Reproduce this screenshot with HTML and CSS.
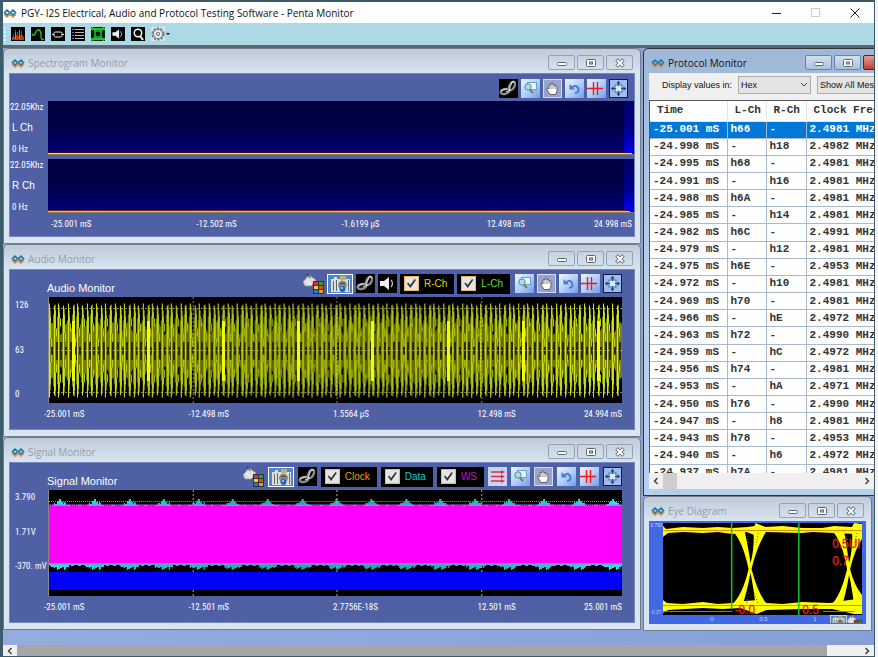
FILE: index.html
```
<!DOCTYPE html>
<html lang="en">
<head>
<meta charset="utf-8">
<title>PGY- I2S Electrical, Audio and Protocol Testing Software - Penta Monitor</title>
<link rel="stylesheet" href="styles.css">
</head>
<body>
<svg class="defs" aria-hidden="true">
  <defs>
    <linearGradient id="blueTile" x1="0" y1="0" x2="1" y2="1"><stop offset="0" stop-color="#eef5ff"/><stop offset=".5" stop-color="#b5d0fa"/><stop offset="1" stop-color="#6f9cf0"/></linearGradient>
    <linearGradient id="spec" x1="0" y1="0" x2="0" y2="1"><stop offset="0" stop-color="#000040"/><stop offset=".5" stop-color="#000048"/><stop offset="1" stop-color="#00007c"/></linearGradient>
    <linearGradient id="edge" x1="0" y1="0" x2="0" y2="1"><stop offset="0" stop-color="#000060"/><stop offset=".6" stop-color="#000090"/><stop offset="1" stop-color="#0000f0"/></linearGradient>
  </defs>
  <symbol id="logo" viewBox="0 0 14 10"><g fill="none" stroke-width="2"><path d="M1.200 5 4 7.800 6.800 5M7.200 5 10 7.800 12.800 5" stroke="#e0904a" transform="translate(0 1)"/><path d="M1.400 4.500 4 2 6.600 4.500 4 7zM7.400 4.500 10 2 12.600 4.500 10 7z" stroke="#1f7fa8" stroke-width="1.700" stroke-linejoin="round"/></g></symbol>
  <symbol id="i-min" viewBox="0 0 12 10"><rect x="1.500" y="4.500" width="9" height="3" rx="1" fill="#fff" stroke="#5a6472"/></symbol>
  <symbol id="i-max" viewBox="0 0 12 10"><rect x="1.500" y="1.500" width="9" height="7" rx="1" fill="#fff" stroke="#5a6472"/><rect x="4.500" y="4" width="3" height="2" fill="#ccd" stroke="#5a6472"/></symbol>
  <symbol id="i-close" viewBox="0 0 12 10"><path d="M2.500 1.500 9.500 8.500M9.500 1.500 2.500 8.500" stroke="#5a6472" stroke-width="3.600"/><path d="M3 2 9 8M9 2 3 8" stroke="#fff" stroke-width="2"/></symbol>
  <symbol id="i-link" viewBox="0 0 19 19"><rect width="19" height="19" fill="#000"/><g fill="none" stroke="#8c8c8c" stroke-width="2.400"><ellipse cx="6" cy="12.500" rx="4.300" ry="2.300" transform="rotate(-15 6 12.500)"/><ellipse cx="13" cy="7" rx="4.500" ry="2.400" transform="rotate(-62 13 7)"/></g><g fill="none" stroke="#e4e4e4" stroke-width="1"><path d="M2 12q2-2.500 6-2M10 11 13 3q3-1 3 1"/><path d="M7 12.500q3 0 5-2"/></g></symbol>
  <symbol id="i-zoom" viewBox="0 0 19 19"><rect width="19" height="19" fill="url(#blueTile)"/><rect x="6.500" y="3.500" width="9" height="7" fill="#eaf6ff" stroke="#6c9fc8"/><circle cx="7" cy="8" r="3.200" fill="#a8dfe4" stroke="#4790b0"/><path d="M9 11l3 3" stroke="#8a7838" stroke-width="2"/></symbol>
  <symbol id="i-hand" viewBox="0 0 19 19"><rect x=".5" y=".5" width="18" height="18" fill="#98a4cf" stroke="#d4dcf4"/><path d="M7 15.500 3.500 10q0-2 2.500 0V6q1-1.500 2 0V4.500q1-1.500 2 0V6q1-1.500 2 0v1q1.500-1 2 1v4l-1.500 3.500z" fill="#fff" stroke="#444" stroke-width=".8"/><path d="M8 6v4M10 5v5M12 6v4" stroke="#666" stroke-width=".7"/></symbol>
  <symbol id="i-undo" viewBox="0 0 19 19"><rect width="19" height="19" fill="url(#blueTile)"/><path d="M6.500 9Q11 4.500 13 9T10 14" fill="none" stroke="#4a7ad0" stroke-width="2"/><path d="M4.500 5v5.500H10z" fill="#4a7ad0"/></symbol>
  <symbol id="i-cross" viewBox="0 0 19 19"><rect width="19" height="19" fill="url(#blueTile)"/><path d="M0 9.500H16M6.500 3V16M10.500 3V16" stroke="#f41818" stroke-width="1.400"/></symbol>
  <symbol id="i-fit" viewBox="0 0 19 19"><rect x=".5" y=".5" width="18" height="18" fill="#9dbdf1" stroke="#101d40"/><rect x="6" y="6" width="7" height="7" fill="#d9e8ff" stroke="#4770b8"/><path d="M9.500 2 7.500 4.500h4zM9.500 17l-2-2.500h4zM2 9.500l2.500-2v4zM17 9.500l-2.500-2v4z" fill="#182848"/><path d="M9.500 4v3M9.500 12v3M4 9.500h3M12 9.500h3" stroke="#304878"/></symbol>
  <symbol id="i-lines" viewBox="0 0 19 19"><rect width="19" height="19" fill="#c3d6fa"/><path d="M3 5H15M3 9.500H15M3 14H15" stroke="#e82c34" stroke-width="1.400"/><path d="M13 3l4 2-4 2zM13 7.500l4 2-4 2zM13 12l4 2-4 2z" fill="#e82c34"/></symbol>
  <symbol id="i-speaker" viewBox="0 0 19 19"><rect width="19" height="19" fill="#000"/><path d="M2 7h4l5-4v13l-5-4H2z" fill="#eee"/><path d="M13 6q3 3.500 0 7" fill="none" stroke="#bbb" stroke-width="1.300"/></symbol>
  <symbol id="i-camera" viewBox="0 0 26 20"><rect x=".5" y=".5" width="25" height="19" fill="#4f86c8" stroke="#fff"/><path d="M4 5h3V3h3v2h3V3h6v2h4v13H4z" fill="#e0e0da"/><path d="M6.500 7v10M9.500 6v11M21.500 6v11" stroke="#666"/><path d="M13 6V2h6v4" fill="#c0b070"/><circle cx="15.500" cy="11" r="4.500" fill="#8c8c8c"/><circle cx="15.500" cy="15" r="3" fill="#1b65cc"/><path d="M13 10q2-2 5 0" stroke="#333" fill="none"/><circle cx="15" cy="14" r="1" fill="#bfe4ff"/></symbol>
  <symbol id="i-paint" viewBox="0 0 21 20"><path d="M0 8 6 1l7 5-5 6H2z" fill="#dcdcdc" stroke="#999" stroke-width=".6"/><path d="M3 6l6 5" stroke="#fff"/><path d="M7 4Q6 0 3 0" fill="none" stroke="#333"/><path d="M10 7h11v13H10z" fill="#333"/><path d="M11 8h4v3h-4z" fill="#e03020"/><path d="M16 8h4v3h-4z" fill="#30a030"/><path d="M11 12h4v3h-4z" fill="#f0d020"/><path d="M16 12h4v3h-4z" fill="#e05010"/><path d="M11 16h4v3h-4z" fill="#3070e0"/><path d="M16 16h4v3h-4z" fill="#e0a020"/></symbol>
  <symbol id="i-gear" viewBox="0 0 14 14"><rect width="14" height="14" fill="#d6e8ee"/><circle cx="7" cy="7" r="5.800" fill="none" stroke="#68747a" stroke-width="1.600" stroke-dasharray="2.300 1.340"/><circle cx="7" cy="7" r="4.500" fill="#f0f4f6" stroke="#68747a"/><circle cx="7" cy="7" r="1.800" fill="#c8d8e0" stroke="#68747a"/></symbol>
  <symbol id="i-chevron" viewBox="0 0 8 6"><path d="M1 1l3 3 3-3" fill="none" stroke="#444"/></symbol>
  <symbol id="i-left" viewBox="0 0 8 10"><path d="M5.500 2 2.500 5l3 3" fill="none" stroke="#444" stroke-width="1.500"/></symbol>
  <symbol id="i-right" viewBox="0 0 8 10"><path d="M2.500 2 5.500 5 2.500 8" fill="none" stroke="#444" stroke-width="1.500"/></symbol>
</svg>

<div class="app">
  <header class="titlebar">
    <svg class="logo"><use href="#logo"/></svg>
    <h1>PGY- I2S Electrical, Audio and Protocol Testing Software - Penta Monitor</h1>
    <div class="sysbuttons">
      <button aria-label="Minimize"><svg viewBox="0 0 10 10"><path d="M0 5.500h9" stroke="#222"/></svg></button>
      <button aria-label="Maximize" disabled><svg viewBox="0 0 10 10"><rect x=".5" y=".5" width="8" height="8" fill="none" stroke="#ccc"/></svg></button>
      <button aria-label="Close"><svg viewBox="0 0 10 10"><path d="M.5.5l9 9M9.500.5l-9 9" stroke="#222"/></svg></button>
    </div>
  </header>

  <nav class="mainbar" aria-label="Monitors">
    <span class="grip"></span>
    <button aria-label="Spectrogram"><svg viewBox="0 0 14 14"><rect width="14" height="14" fill="#000"/><path d="M1 13V10h1V7h1v3h1V3h1v5h1V5h1v4h1V2h1v6h1V4h1v4h1v2h1v3z" fill="#b83808"/><path d="M4.500 12V5M8.500 12V4" stroke="#f07818"/></svg></button>
    <button aria-label="Audio"><svg viewBox="0 0 14 14"><rect width="14" height="14" fill="#000"/><path d="M1 7Q3 10 4.500 6T8 3 10 9 13 12" fill="none" stroke="#20c020" stroke-width="1.400"/></svg></button>
    <button aria-label="Signal"><svg viewBox="0 0 14 14"><rect width="14" height="14" fill="#000"/><rect x="3" y="5" width="8" height="5" rx="1.500" fill="none" stroke="#eee"/><path d="M1 7.500h2M11 7.500h2" stroke="#eee"/></svg></button>
    <button aria-label="Protocol"><svg viewBox="0 0 14 14"><rect width="14" height="14" fill="#000"/><path d="M4 2.500h9M4 5.500h9M4 8.500h9M4 11.500h9" stroke="#bbb"/><path d="M1.500 2.500h1M1.500 5.500h1M1.500 8.500h1M1.500 11.500h1" stroke="#fff"/></svg></button>
    <button aria-label="Eye diagram"><svg viewBox="0 0 14 14"><rect width="14" height="14" fill="#021804"/><path d="M0 2h14M0 12h14" stroke="#18c828" stroke-width="2"/><path d="M1 0 4 4v6L1 14M13 0 10 4v6l3 4M4 4h6M4 10h6" fill="none" stroke="#18c828" stroke-width="1.500"/></svg></button>
    <button aria-label="Sound"><svg><use href="#i-speaker"/></svg></button>
    <button aria-label="Search"><svg viewBox="0 0 14 14"><rect width="14" height="14" fill="#000"/><circle cx="7" cy="6" r="3.700" fill="none" stroke="#fff" stroke-width="1.500"/><path d="M9 9l3 4" stroke="#fff" stroke-width="2"/></svg></button>
    <button class="gear" aria-label="Settings"><svg><use href="#i-gear"/></svg><span class="caret"></span></button>
  </nav>

  <main class="desktop">
    <div class="column">
      <section class="window">
        <div class="caption"><svg class="logo"><use href="#logo"/></svg><h2>Spectrogram Monitor</h2>
          <div class="winbuttons"><button aria-label="Minimize"><svg><use href="#i-min"/></svg></button><button aria-label="Restore"><svg><use href="#i-max"/></svg></button><button aria-label="Close"><svg><use href="#i-close"/></svg></button></div></div>
        <div class="panel spectro">
          <div class="tools">
            <button aria-label="Link"><svg><use href="#i-link"/></svg></button><button aria-label="Zoom"><svg><use href="#i-zoom"/></svg></button><button aria-label="Pan"><svg><use href="#i-hand"/></svg></button><button aria-label="Undo zoom"><svg><use href="#i-undo"/></svg></button><button aria-label="Cursors"><svg><use href="#i-cross"/></svg></button><button aria-label="Fit"><svg><use href="#i-fit"/></svg></button>
          </div>
          <div class="channel"><div class="scale"><span>22.05Khz</span><b>L Ch</b><span>0 Hz</span></div>
            <svg class="spectrum" viewBox="0 0 587 54" preserveAspectRatio="none"><rect width="587" height="54" fill="url(#spec)"/><rect x="577" width="10" height="52" fill="url(#edge)"/><path d="M0 51.500H580" stroke="#4c0010"/><path d="M0 52.500H585" stroke="#f4dc80"/><path d="M0 53.500H587" stroke="#8a8040"/></svg></div>
          <div class="channel"><div class="scale"><span>22.05Khz</span><b>R Ch</b><span>0 Hz</span></div>
            <svg class="spectrum" viewBox="0 0 587 54" preserveAspectRatio="none"><rect width="587" height="54" fill="url(#spec)"/><rect x="577" width="10" height="52" fill="url(#edge)"/><path d="M0 51.500H580" stroke="#702010"/><path d="M0 52.500H583" stroke="#dcc080"/><path d="M0 53.500H587" stroke="#8a8050"/></svg></div>
          <div class="axis"><span>-25.001 mS</span><span>-12.502 mS</span><span>-1.6199 µS</span><span>12.498 mS</span><span>24.998 mS</span></div>
        </div>
      </section>

      <section class="window">
        <div class="caption"><svg class="logo"><use href="#logo"/></svg><h2>Audio Monitor</h2>
          <div class="winbuttons"><button aria-label="Minimize"><svg><use href="#i-min"/></svg></button><button aria-label="Restore"><svg><use href="#i-max"/></svg></button><button aria-label="Close"><svg><use href="#i-close"/></svg></button></div></div>
        <div class="panel scope">
          <div class="head"><h3>Audio Monitor</h3>
            <div class="tools">
              <button class="paint" aria-label="Colors"><svg><use href="#i-paint"/></svg></button><button class="camera" aria-label="Snapshot"><svg><use href="#i-camera"/></svg></button><button aria-label="Link"><svg><use href="#i-link"/></svg></button><button aria-label="Play"><svg><use href="#i-speaker"/></svg></button>
              <label class="check yellow"><input type="checkbox" checked>R-Ch</label><label class="check green"><input type="checkbox" checked>L-Ch</label>
              <button class="first" aria-label="Zoom"><svg><use href="#i-zoom"/></svg></button><button aria-label="Pan"><svg><use href="#i-hand"/></svg></button><button aria-label="Undo zoom"><svg><use href="#i-undo"/></svg></button><button aria-label="Cursors"><svg><use href="#i-cross"/></svg></button><button aria-label="Fit"><svg><use href="#i-fit"/></svg></button>
            </div></div>
          <div class="plotrow"><div class="scale wide"><span>126</span><span>63</span><span>0</span></div>
            <svg class="plot" viewBox="0 0 574 106" preserveAspectRatio="none"><rect width="574" height="106" fill="#000"/><g shape-rendering="crispEdges"><path id="aFill" stroke="#7c8400"/><path id="aDark" stroke="#262600" stroke-width="2"/><path id="aLime" fill="none" stroke="#b4dc20"/><path id="aPeak" stroke="#dcec10"/><path id="aHot" stroke="#f4fc00" stroke-width="3"/></g><path d="M0 11.500H574M0 53.500H574M0 95.500H574M144.500 0V106M288.500 0V106M433.500 0V106" stroke="#ded8a0" stroke-opacity=".6" stroke-dasharray="2 2"/></svg></div>
          <div class="axis"><span>-25.001 mS</span><span>-12.498 mS</span><span>1.5564 µS</span><span>12.498 mS</span><span>24.994 mS</span></div>
        </div>
      </section>

      <section class="window">
        <div class="caption"><svg class="logo"><use href="#logo"/></svg><h2>Signal Monitor</h2>
          <div class="winbuttons"><button aria-label="Minimize"><svg><use href="#i-min"/></svg></button><button aria-label="Restore"><svg><use href="#i-max"/></svg></button><button aria-label="Close"><svg><use href="#i-close"/></svg></button></div></div>
        <div class="panel scope">
          <div class="head"><h3>Signal Monitor</h3>
            <div class="tools signaltools">
              <button class="paint" aria-label="Colors"><svg><use href="#i-paint"/></svg></button><button class="camera" aria-label="Snapshot"><svg><use href="#i-camera"/></svg></button><button aria-label="Link"><svg><use href="#i-link"/></svg></button>
              <label class="check orange"><input type="checkbox" checked>Clock</label><label class="check cyan"><input type="checkbox" checked>Data</label><label class="check magenta"><input type="checkbox" checked>WS</label>
              <button aria-label="Lanes"><svg><use href="#i-lines"/></svg></button><button class="first" aria-label="Zoom"><svg><use href="#i-zoom"/></svg></button><button aria-label="Pan"><svg><use href="#i-hand"/></svg></button><button aria-label="Undo zoom"><svg><use href="#i-undo"/></svg></button><button aria-label="Cursors"><svg><use href="#i-cross"/></svg></button><button aria-label="Fit"><svg><use href="#i-fit"/></svg></button>
            </div></div>
          <div class="plotrow"><div class="scale wide volts"><span>3.790</span><span>1.71V</span><span>-370. mV</span></div>
            <svg class="plot" viewBox="0 0 574 106" preserveAspectRatio="none"><rect width="574" height="106" fill="#000"/><path d="M0 11.500H574" stroke="#999" stroke-dasharray="1 1"/><path d="M144.500 0V106M288.500 0V106M433.500 0V106" stroke="#aaa" stroke-dasharray="2 2"/><path id="sCyan" stroke="#20e8f0" shape-rendering="crispEdges"/><rect y="14.500" width="574" height="60" fill="#9c80e8"/><path id="sNoise" stroke="#701050"/><rect y="16" width="574" height="57" fill="#f0f"/><rect y="82" width="573" height="18" fill="#00f"/></svg></div>
          <div class="axis"><span>-25.001 mS</span><span>-12.501 mS</span><span>2.7756E-18S</span><span>12.501 mS</span><span>25.001 mS</span></div>
        </div>
      </section>
    </div>

    <div class="column side">
      <section class="window active">
        <div class="caption"><svg class="logo"><use href="#logo"/></svg><h2>Protocol Monitor</h2>
          <div class="winbuttons"><button aria-label="Minimize"><svg><use href="#i-min"/></svg></button><button aria-label="Restore"><svg><use href="#i-max"/></svg></button><button class="red" aria-label="Close"><svg><use href="#i-close"/></svg></button></div></div>
        <div class="protocol">
          <div class="filters">
            <label for="fmt">Display values in:</label>
            <span class="drop"><select id="fmt"><option>Hex</option></select><svg><use href="#i-chevron"/></svg></span>
            <span class="drop more"><select aria-label="Messages"><option>Show All Messages</option></select></span>
          </div>
          <div class="grid">
            <table>
              <colgroup><col class="c1"><col class="c2"><col class="c3"><col></colgroup>
              <thead><tr><th>Time</th><th>L-Ch</th><th>R-Ch</th><th>Clock Freq</th></tr></thead>
              <tbody>
              <tr class="sel"><td>-25.001 mS</td><td>h66</td><td>-</td><td>2.4981 MHz</td></tr>
              <tr><td>-24.998 mS</td><td>-</td><td>h18</td><td>2.4982 MHz</td></tr>
              <tr><td>-24.995 mS</td><td>h68</td><td>-</td><td>2.4981 MHz</td></tr>
              <tr><td>-24.991 mS</td><td>-</td><td>h16</td><td>2.4981 MHz</td></tr>
              <tr><td>-24.988 mS</td><td>h6A</td><td>-</td><td>2.4981 MHz</td></tr>
              <tr><td>-24.985 mS</td><td>-</td><td>h14</td><td>2.4981 MHz</td></tr>
              <tr><td>-24.982 mS</td><td>h6C</td><td>-</td><td>2.4991 MHz</td></tr>
              <tr><td>-24.979 mS</td><td>-</td><td>h12</td><td>2.4981 MHz</td></tr>
              <tr><td>-24.975 mS</td><td>h6E</td><td>-</td><td>2.4953 MHz</td></tr>
              <tr><td>-24.972 mS</td><td>-</td><td>h10</td><td>2.4981 MHz</td></tr>
              <tr><td>-24.969 mS</td><td>h70</td><td>-</td><td>2.4981 MHz</td></tr>
              <tr><td>-24.966 mS</td><td>-</td><td>hE</td><td>2.4972 MHz</td></tr>
              <tr><td>-24.963 mS</td><td>h72</td><td>-</td><td>2.4990 MHz</td></tr>
              <tr><td>-24.959 mS</td><td>-</td><td>hC</td><td>2.4972 MHz</td></tr>
              <tr><td>-24.956 mS</td><td>h74</td><td>-</td><td>2.4981 MHz</td></tr>
              <tr><td>-24.953 mS</td><td>-</td><td>hA</td><td>2.4971 MHz</td></tr>
              <tr><td>-24.950 mS</td><td>h76</td><td>-</td><td>2.4990 MHz</td></tr>
              <tr><td>-24.947 mS</td><td>-</td><td>h8</td><td>2.4981 MHz</td></tr>
              <tr><td>-24.943 mS</td><td>h78</td><td>-</td><td>2.4953 MHz</td></tr>
              <tr><td>-24.940 mS</td><td>-</td><td>h6</td><td>2.4972 MHz</td></tr>
              <tr><td>-24.937 mS</td><td>h7A</td><td>-</td><td>2.4981 MHz</td></tr>
              </tbody>
            </table>
          </div>
          <div class="hscroll"><svg><use href="#i-left"/></svg><span class="thumb"></span><svg class="end"><use href="#i-right"/></svg></div>
        </div>
      </section>

      <section class="window eye">
        <div class="caption"><svg class="logo"><use href="#logo"/></svg><h2>Eye Diagram</h2>
          <div class="winbuttons"><button aria-label="Minimize"><svg><use href="#i-min"/></svg></button><button aria-label="Restore"><svg><use href="#i-max"/></svg></button><button aria-label="Close"><svg><use href="#i-close"/></svg></button></div></div>
        <div class="eyepanel">
          <div class="eyescale"><span>3.790</span><span>-0.37</span></div>
          <svg class="eyeplot" viewBox="0 0 200 92" preserveAspectRatio="none">
            <rect width="200" height="92" fill="#000"/>
            <g fill="#ff0">
              <path d="M0 3 3 6 20 4 40 5 55 4 70 5 85 4 92 3 93 0 103 4 120 3 140 5 160 5 172 3 190 4 192 0 200 1V15L194 11 172 10 150 9 140 10 103 9 97 14 84 9 70 11 55 9 40 10 20 9 5 10 0 14z"/>
              <path d="M0 77 4 80 20 81 40 79 55 81 70 80 82 78 96 77 104 80 120 81 140 79 168 80 180 78 195 76 200 79V91H192L170 86 140 86 104 87 94 91 78 85 60 86 40 85 5 87 0 90z"/>
              <path d="M70 8H82Q86 26 88 40 92 25 91 8H104Q94 24 89 46 95 70 105 82H93Q91 65 88 50 84 70 80 82H69Q80 72 86 46 80 18 70 8zM170 8H182Q185 26 187 40 191 25 190 8H200V16Q193 26 188 46 192 62 200 72V82H192Q190 65 187 52 184 70 180 82H169Q179 72 185 46 180 18 170 8z"/>
            </g>
            <path d="M84 10l2 10M96 10 93 22M84 80l2-10M95 80 92 70M183 10l2 10M195 10 192 22" stroke="#605800" stroke-dasharray="1 2"/>
            <path d="M0 7.500H200M0 82.500H200" stroke="#e09000"/>
            <path d="M0 88.500H70M161 88.500H192" stroke="#8a8a00"/>
            <path d="M69 0V86M136.500 0V92" stroke="#10c820" stroke-width="1.500"/>
            <g class="marks"><text x="170" y="25">0.5UI</text><text x="170" y="42">0.7</text><text x="72" y="91">-0.0</text><text x="140" y="91">0.5</text></g>
          </svg>
          <div class="eyeaxis"><span>0</span><span>0.5</span><span>1</span><svg class="cam"><use href="#i-camera"/></svg><svg class="pnt"><use href="#i-paint"/></svg></div>
        </div>
      </section>
    </div>
  </main>
  <div class="hscroll page"><svg><use href="#i-left"/></svg><span class="thumb"></span><svg class="end"><use href="#i-right"/></svg></div>
</div>
<script src="script.js"></script>
</body>
</html>
```
FILE: styles.css
```
* { box-sizing: border-box; }
body { margin: 0; background: #f4f4f4; font-family: "Open Sans", "Noto Sans", sans-serif; color: #111; }
h1, h2, h3 { margin: 0; font-weight: 400; }
button { padding: 0; border: 0; background: none; display: block; }
svg { display: block; }
.defs { position: absolute; width: 0; height: 0; }
.app { display: flex; flex-direction: column; height: 100vh; margin-right: 3px; border: 2px solid #3c5c6c; border-width: 2px 1px 1px 3px; overflow: hidden; }

.titlebar { display: flex; align-items: center; height: 21px; flex: none; background: #fff; }
.logo { width: 14px; height: 10px; flex: none; }
.titlebar h1 { margin-left: 4px; font-size: 10px; line-height: 20px; white-space: nowrap; }
.sysbuttons { display: flex; gap: 29px; margin-left: auto; padding-right: 14px; }
.sysbuttons svg { width: 10px; height: 10px; }

.mainbar { display: flex; align-items: center; gap: 6px; height: 22px; flex: none; padding-left: 1px; background: #add8e6; }
.mainbar svg { width: 14px; height: 14px; }
.grip { width: 2px; height: 14px; margin-right: -1px; border-left: 2px dotted #dff2f8; }
.gear { display: flex; align-items: center; gap: 1px; }
.caret { border: 2px solid transparent; border-top-color: #111; border-bottom: 0; }

.desktop { flex: 1; min-height: 0; display: grid; grid-template-columns: minmax(0, 1fr) 231px; gap: 2px; border-top: 3px solid #5f6670; background: linear-gradient(90deg, #94addf, #869fd8); }
.column { min-width: 0; overflow: hidden; }
.side { display: flex; flex-direction: column; }
.window { border: 1px solid #737d88; border-radius: 5px 5px 0 0; padding: 0 5px 6px; background: linear-gradient(#bfcbd9, #d9e5f1 25px); }
.caption { display: flex; align-items: center; height: 24px; padding: 3px 2px 0; }
.caption h2 { margin-left: 3px; font-size: 10px; line-height: 16px; color: #949ca6; white-space: nowrap; }
.winbuttons { display: flex; gap: 2px; margin-left: auto; }
.winbuttons button { display: grid; place-items: center; width: 27px; height: 15px; border: 1px solid #94a2b7; border-radius: 2px; }
.winbuttons svg { width: 12px; height: 10px; }

.panel { background: #5060a4; color: #fff; border: 1px solid #7685c4; }
.tools { display: flex; align-items: center; justify-content: flex-end; gap: 3px; }
.tools svg { width: 19px; height: 19px; }
.tools .paint svg { width: 21px; height: 20px; }
.tools .camera svg { width: 26px; height: 20px; }
.tools .first { margin-left: 2px; }
.spectro .tools { height: 27px; padding: 2px 6px 0 0; }
.channel, .plotrow { display: flex; }
.channel { height: 54px; margin-bottom: 4px; }
.scale { display: flex; flex-direction: column; justify-content: space-between; width: 38px; flex: none; font: 9px/12px "Liberation Sans Narrow", "Roboto Condensed", "Liberation Sans", sans-serif; white-space: nowrap; }
.scale b { font: 10px/12px "Liberation Sans", sans-serif; padding-left: 2px; }
.scale span:last-child { padding-left: 2px; }
.spectrum { flex: 1; min-width: 0; height: 54px; }
.axis { display: grid; grid-template-columns: repeat(3, 25%) auto auto; font: 9px/14px "Liberation Sans Narrow", "Roboto Condensed", "Liberation Sans", sans-serif; white-space: nowrap; }
.axis span:last-child { justify-self: end; }
.spectro .axis { padding: 0 2px 5px 41px; }

.scope { padding-right: 12px; }
.scope .head { display: flex; align-items: flex-end; height: 27px; padding-left: 37px; }
.scope h3 { font: 11px/18px "Liberation Sans", sans-serif; white-space: nowrap; }
.head .tools { flex: 1; height: 27px; }
.head .signaltools { gap: 4px; }
.signaltools .first { margin-left: 0; }
.check { display: flex; align-items: center; gap: 5px; height: 20px; padding: 0 7px 0 4px; background: #000; font: 10px/16px "Liberation Sans", sans-serif; white-space: nowrap; }
.check input { appearance: none; display: grid; place-items: center; width: 15px; height: 15px; margin: 0; border: 1px solid #f0b858; background: #e4e4e4; }
.check input:checked::after { content: ""; width: 9px; height: 9px; background: #333; clip-path: polygon(0 50%, 14% 40%, 36% 68%, 86% 0, 100% 10%, 38% 100%); }
.yellow { color: #d8d800; }
.green { color: #60e020; }
.orange { color: #ee9a1c; }
.cyan { color: #10c8d8; }
.magenta { color: #c010c8; }
.scale.wide { padding: 2px 0 3px 5px; }
.scale.wide.volts { padding: 1px 0 24px 5px; }
.scale.wide span:last-child { padding: 0; }
.plot { flex: 1; min-width: 0; height: 106px; border-left: 1px solid #888; }
.scope .axis { padding: 4px 0 8px 34px; }

.active { width: 255px; background: linear-gradient(#9fb8d8, #bdd2ea 60%, #b4cfee); border-color: #333; }
.active .caption h2 { color: #111; }
.active .winbuttons button { border-color: #6c84a4; background: linear-gradient(#d2e0f0, #a9c2df); }
.active .winbuttons .red { background: linear-gradient(#e0a090, #c04030); border-color: #602018; }
.protocol { background: #f0f0f0; }
.filters { display: flex; align-items: center; height: 27px; padding: 0 0 4px 13px; font: 9px/16px "Liberation Sans", sans-serif; white-space: nowrap; }
.drop { position: relative; margin-left: 6px; width: 73px; flex: none; }
.drop.more { width: 90px; }
.drop select { appearance: none; display: block; width: 100%; height: 18px; padding: 0 2px; border: 1px solid #adadad; border-radius: 0; background: #e3e3e3; font: 9px/14px "Liberation Sans", sans-serif; color: #111; }
.drop svg { position: absolute; right: 3px; top: 6px; width: 8px; height: 6px; }
.grid { height: 373px; overflow: hidden; border: 1px solid #555; border-bottom: 0; background: #fff; }
table { width: 260px; height: 381px; table-layout: fixed; border-collapse: collapse; font: 11px/14px "Liberation Mono", monospace; font-weight: 700; color: #333; }
.c1 { width: 77px; }
.c2 { width: 39px; }
.c3 { width: 40px; }
th, td { padding: 0 2px 1px 3px; border: 1px solid #a9bad0; border-width: 0 1px 1px 0; text-align: left; white-space: nowrap; font-weight: inherit; }
th { height: 20px; padding-left: 7px; border-bottom-color: #e4e4e4; border-right-color: #e4e4e4; }
.sel td { background: #0078d7; color: #fff; }
.hscroll { display: flex; align-items: center; height: 16px; flex: none; background: #f0f0f0; }
.hscroll svg { width: 8px; height: 10px; margin: 0 3px; flex: none; }
.thumb { height: 100%; width: 14px; background: #cdcdcd; }
.protocol .hscroll { width: 225px; }
.hscroll .end { margin-left: auto; }
.page { height: 11px; }
.page .thumb { width: 93%; background: #a6a6a6; }

.eye { margin-right: 2px; }
.eyepanel { display: grid; grid-template-columns: 13px minmax(0, 1fr); grid-template-rows: 92px 8px; padding: 2px 4px 1px 1px; background: #4169e1; }
.eyescale { display: flex; flex-direction: column; justify-content: space-between; font: 5px/5px "Liberation Sans Narrow", "Liberation Sans", sans-serif; color: #c4d0f8; }
.eyeplot { width: 100%; height: 92px; }
.marks { font: 12px "Liberation Sans", sans-serif; fill: #f01818; stroke: #f01818; stroke-width: .3px; }
.eyeaxis { grid-column: 2; display: grid; grid-template-columns: 50px 53px 50px 17px 15px; padding-left: 14px; height: 8px; overflow: hidden; text-align: center; font: 6px/8px "Liberation Sans", sans-serif; color: #c4d0f8; }
.eyeaxis span { padding-left: 20px; }
.cam { width: 17px; height: 13px; }
.pnt { width: 15px; height: 14px; }
```
FILE: script.js
```
// Vertical strokes for the audio trace: one spindle every 4.7 units around the midline.
const set = (id, d) => document.getElementById(id).setAttribute('d', d);
const mid = 53.5;
const bar = (x, h) => `M${Math.floor(x) + 0.5} ${mid - h}V${mid + h}`;
let fill = '', dark = '', lime = '', peak = '', hot = '';
for (let x = 0.5; x < 574; x += 1) fill += bar(x, 22 + Math.round(6 * Math.sin(x * 0.42)));
for (let i = 0; i < 122; i++) {
  const x = 0.5 + i * 4.7;
  const px = Math.floor(x) + 0.5;
  const dist = Math.abs(((x - 24 + 37.5) % 75 + 75) % 75 - 37.5);
  const inner = 12 + (i * 7 % 5) * 5;
  const outer = 34 + (i * 3 % 4) * 2;
  peak += bar(x, i % 2 ? 45 : 47);
  fill += bar(x + 1, outer + 6) + bar(x - 1, outer - 4);
  lime += `M${px + 1} ${mid - outer}V${mid - inner}M${px + 1} ${mid + inner}V${mid + outer}`;
  lime += `M${px + 2} ${mid - inner}v8M${px + 2} ${mid + inner}v-8`;
  dark += `M${px + 2.5} ${mid - (i % 3 ? 9 : 4)}V${mid + (i % 3 ? 9 : 4)}`;
  if (dist < 2.3) hot += bar(x, 30);
}
set('aFill', fill);
set('aDark', dark);
set('aLime', lime);
set('aPeak', peak);
set('aHot', hot);

// Data overshoot above and below the word-select band, peaking every 34.6 units.
let cyan = '', noise = '';
for (let x = 0; x < 574; x++) {
  const d = Math.abs(((x - 11 + 17.3) % 34.6 + 34.6) % 34.6 - 17.3);
  const j = (x * 13 % 7) / 7;
  const up = d < 1 ? 6 : d < 3 ? 3 + j : d < 6 ? 1 + 2 * j : 0;
  const down = d < 6 ? 2 + 3 * j : d < 9 ? 1 + 2 * j : j;
  cyan += `M${x + 0.5} ${15 - Math.round(up)}V20M${x + 0.5} 70V${75 + Math.round(down)}`;
  if (d > 8 && x * 17 % 11 < 4) noise += `M${x + 0.5} 14.500V16`;
}
set('sCyan', cyan);
set('sNoise', noise);
```
